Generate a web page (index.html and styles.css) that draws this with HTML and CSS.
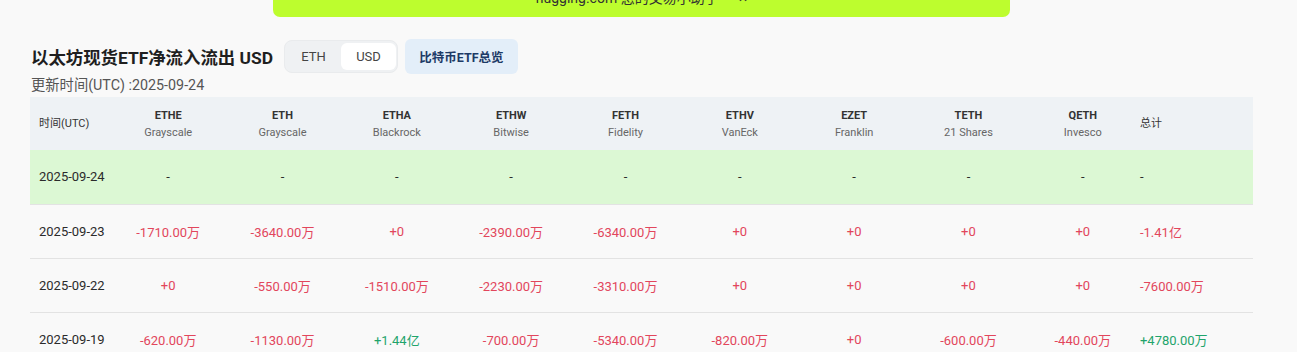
FILE: index.html
```html
<!DOCTYPE html>
<html lang="zh">
<head>
<meta charset="utf-8">
<title>以太坊现货ETF净流入流出</title>
<link rel="stylesheet" href="styles.css">
</head>
<body>
<div class="toast">
  <span class="toast-text">hugging.com 您的交易小助手</span>
  <span class="toast-close">×</span>
</div>
<main class="page">
  <div class="titlebar">
    <h1 class="title">以太坊现货ETF净流入流出 USD</h1>
    <div class="toggle">
      <span class="seg">ETH</span>
      <span class="seg active">USD</span>
    </div>
    <a class="btc-btn">比特币ETF总览</a>
  </div>
  <div class="updated">更新时间(UTC) :2025-09-24</div>
  <table class="etf">
    <colgroup>
      <col class="c-date">
      <col class="c-fund"><col class="c-fund"><col class="c-fund"><col class="c-fund"><col class="c-fund"><col class="c-fund"><col class="c-fund"><col class="c-fund"><col class="c-fund">
      <col>
    </colgroup>
    <thead>
      <tr>
        <th class="date">时间(UTC)</th>
        <th><b>ETHE</b><span>Grayscale</span></th>
        <th><b>ETH</b><span>Grayscale</span></th>
        <th><b>ETHA</b><span>Blackrock</span></th>
        <th><b>ETHW</b><span>Bitwise</span></th>
        <th><b>FETH</b><span>Fidelity</span></th>
        <th><b>ETHV</b><span>VanEck</span></th>
        <th><b>EZET</b><span>Franklin</span></th>
        <th><b>TETH</b><span>21 Shares</span></th>
        <th><b>QETH</b><span>Invesco</span></th>
        <th class="total">总计</th>
      </tr>
    </thead>
    <tbody>
      <tr class="today">
        <td class="date">2025-09-24</td>
        <td>-</td><td>-</td><td>-</td><td>-</td><td>-</td><td>-</td><td>-</td><td>-</td><td>-</td>
        <td class="total">-</td>
      </tr>
      <tr>
        <td class="date">2025-09-23</td>
        <td class="neg">-1710.00万</td><td class="neg">-3640.00万</td><td class="neg">+0</td><td class="neg">-2390.00万</td><td class="neg">-6340.00万</td><td class="neg">+0</td><td class="neg">+0</td><td class="neg">+0</td><td class="neg">+0</td>
        <td class="total neg">-1.41亿</td>
      </tr>
      <tr>
        <td class="date">2025-09-22</td>
        <td class="neg">+0</td><td class="neg">-550.00万</td><td class="neg">-1510.00万</td><td class="neg">-2230.00万</td><td class="neg">-3310.00万</td><td class="neg">+0</td><td class="neg">+0</td><td class="neg">+0</td><td class="neg">+0</td>
        <td class="total neg">-7600.00万</td>
      </tr>
      <tr>
        <td class="date">2025-09-19</td>
        <td class="neg">-620.00万</td><td class="neg">-1130.00万</td><td class="pos">+1.44亿</td><td class="neg">-700.00万</td><td class="neg">-5340.00万</td><td class="neg">-820.00万</td><td class="neg">+0</td><td class="neg">-600.00万</td><td class="neg">-440.00万</td>
        <td class="total pos">+4780.00万</td>
      </tr>
    </tbody>
  </table>
</main>
</body>
</html>
```

FILE: styles.css
```css
* { box-sizing: border-box; }

html, body {
  margin: 0;
  padding: 0;
  background: #f9f9f9;
  font-family: Roboto, "Noto Sans CJK SC", sans-serif;
  color: #2b2b2b;
  overflow: hidden;
}

.toast {
  position: absolute;
  left: 273px;
  top: -23px;
  width: 737px;
  height: 40px;
  background: #bdfd2e;
  border-radius: 7px;
  display: flex;
  align-items: center;
  justify-content: center;
  gap: 20px;
  font-size: 14px;
  color: #333;
  z-index: 5;
}

.toast-close { font-size: 16px; }

.page {
  padding: 39px 44px 0 30px;
}

.titlebar {
  display: flex;
  align-items: center;
  height: 35px;
}

.title {
  margin: 0 11px 0 1px;
  font-size: 17.4px;
  font-weight: 700;
  color: #1f1f1f;
  white-space: nowrap;
}

.toggle {
  display: flex;
  width: 114px;
  height: 33px;
  padding: 2px 1px 2px 1px;
  background: #eff1f3;
  border: 1px solid #e9ebed;
  border-radius: 8px;
}

.seg {
  flex: 1;
  display: flex;
  align-items: center;
  justify-content: center;
  font-size: 13px;
  color: #444;
  border-radius: 6px;
}

.seg.active {
  background: #ffffff;
}

.btc-btn {
  margin-left: 7px;
  width: 113px;
  height: 35px;
  display: flex;
  align-items: center;
  justify-content: center;
  background: #e3eef9;
  border-radius: 6px;
  font-size: 12.5px;
  font-weight: 700;
  color: #1d3a66;
}

.updated {
  margin: 1px 0 0 1px;
  font-size: 14.3px;
  line-height: 20px;
  color: #555;
}

.etf {
  margin-top: 2px;
  width: 1223px;
  table-layout: fixed;
  border-collapse: collapse;
}

.c-date { width: 81px; }
.c-fund { width: 114.33px; }

.etf thead tr {
  background: #eef2f5;
  height: 53px;
}

.etf th {
  padding: 0;
  text-align: center;
  font-size: 11px;
  font-weight: 400;
  line-height: 17px;
  color: #333;
}

.etf th b {
  display: block;
  font-weight: 700;
  color: #333;
}

.etf th span {
  display: block;
  color: #666;
}

.etf th.date,
.etf td.date {
  text-align: left;
  padding-left: 9px;
}

.etf th.total,
.etf td.total {
  text-align: left;
  padding-left: 0;
}

.etf tbody tr {
  height: 54px;
  border-bottom: 1px solid #e3e3e3;
}

.etf tbody tr.today {
  background: #dcf8d4;
}

.etf td {
  padding: 0;
  text-align: center;
  font-size: 13px;
  color: #2b2b2b;
}

.etf td.neg { color: #e2465c; }
.etf td.pos { color: #1fa46c; }
```
